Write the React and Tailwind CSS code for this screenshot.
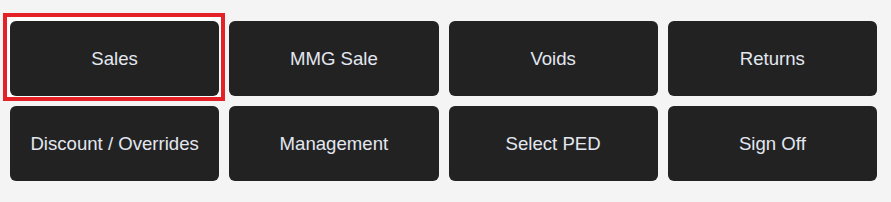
import React from "react";

const buttons = [
  "Sales",
  "MMG Sale",
  "Voids",
  "Returns",
  "Discount / Overrides",
  "Management",
  "Select PED",
  "Sign Off",
];

const App = () => {
  return (
    <div className="min-h-[202px] bg-[#f4f4f4] pt-[21px] pl-[10px]" style={{ fontFamily: '"Liberation Sans", Arial, sans-serif' }}>
      <div className="grid w-[867px] grid-cols-4 gap-[10px]">
        {buttons.map((label, i) => (
          <div key={label} className="relative">
            {i === 0 && (
              <span className="absolute -left-[7px] -top-[8px] -right-[6px] -bottom-[5px] border-4 border-[#e42126] bg-white" />
            )}
            <button className="relative h-[75px] w-full rounded-[6px] bg-[#222222] text-[18.6px] text-[#e2e7f0]">
              {label}
            </button>
          </div>
        ))}
      </div>
    </div>
  );
};

export default App;
